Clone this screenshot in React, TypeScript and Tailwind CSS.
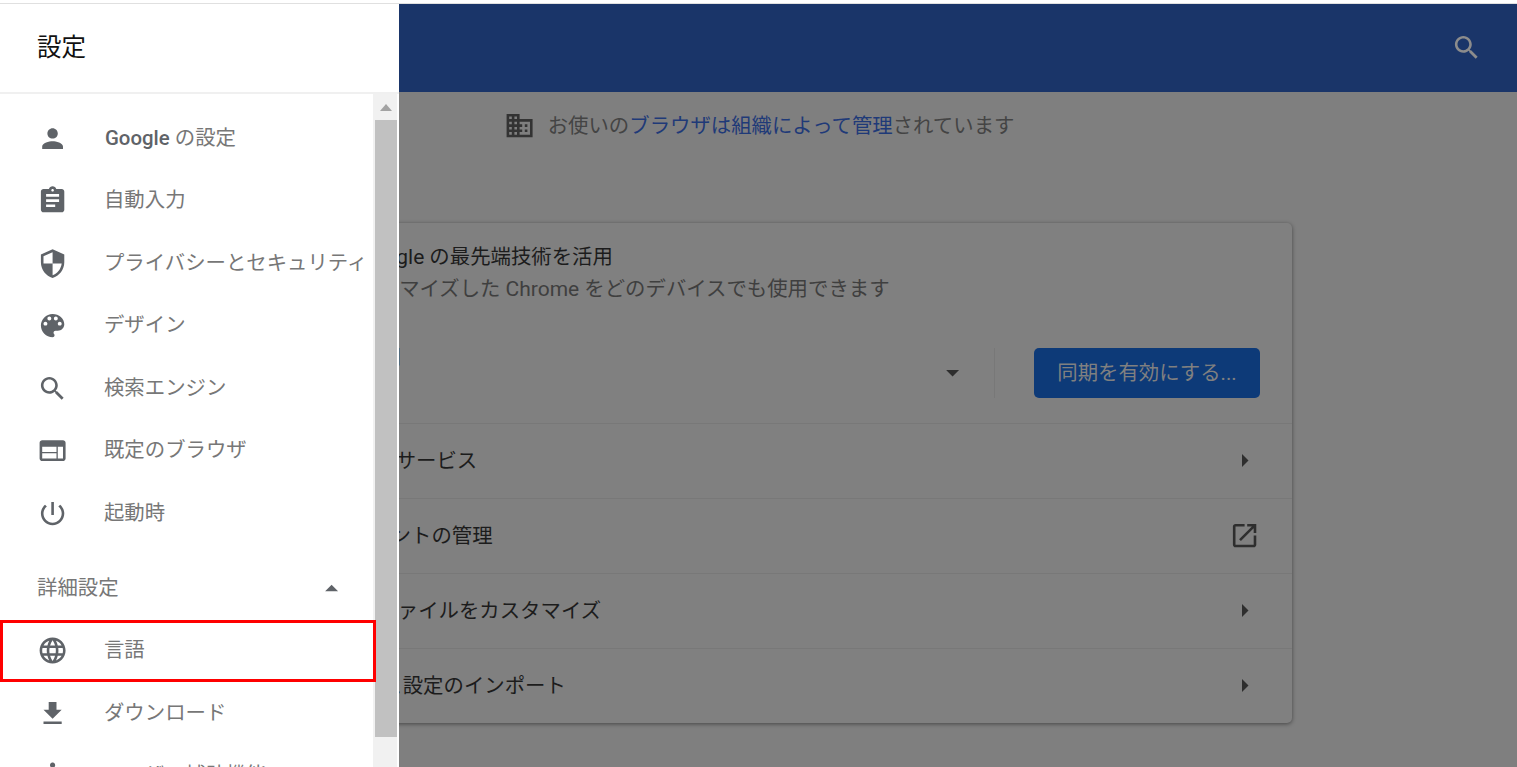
const JP = "font-['Roboto','Noto_Sans_CJK_JP',sans-serif]";

const ICONS = {
  person: 'M12 12c2.21 0 4-1.79 4-4s-1.79-4-4-4-4 1.79-4 4 1.79 4 4 4zm0 2c-2.67 0-8 1.34-8 4v2h16v-2c0-2.66-5.33-4-8-4z',
  assignment: 'M19 3h-4.18C14.4 1.84 13.3 1 12 1c-1.3 0-2.4.84-2.82 2H5c-1.1 0-2 .9-2 2v14c0 1.1.9 2 2 2h14c1.1 0 2-.9 2-2V5c0-1.1-.9-2-2-2zm-7 0c.55 0 1 .45 1 1s-.45 1-1 1-1-.45-1-1 .45-1 1-1zm2 14H7v-2h7v2zm3-4H7v-2h10v2zm0-4H7V7h10v2z',
  security: 'M12 1L3 5v6c0 5.55 3.84 10.74 9 12 5.16-1.26 9-6.45 9-12V5l-9-4zm0 10.99h7c-.53 4.12-3.28 7.79-7 8.94V12H5V6.3l7-3.11v8.8z',
  palette: 'M12 3c-4.97 0-9 4.03-9 9s4.03 9 9 9c.83 0 1.5-.67 1.5-1.5 0-.39-.15-.74-.39-1.01-.23-.26-.38-.61-.38-.99 0-.83.67-1.5 1.5-1.5H16c2.76 0 5-2.24 5-5 0-4.42-4.03-8-9-8zm-5.5 9c-.83 0-1.5-.67-1.5-1.5S5.67 9 6.5 9 8 9.67 8 10.5 7.33 12 6.5 12zm3-4C8.67 8 8 7.33 8 6.5S8.67 5 9.5 5s1.5.67 1.5 1.5S10.33 8 9.5 8zm5 0c-.83 0-1.5-.67-1.5-1.5S13.67 5 14.5 5s1.5.67 1.5 1.5S15.33 8 14.5 8zm3 4c-.83 0-1.5-.67-1.5-1.5S16.67 9 17.5 9s1.5.67 1.5 1.5-.67 1.5-1.5 1.5z',
  search: 'M15.5 14h-.79l-.28-.27C15.41 12.59 16 11.11 16 9.5 16 5.91 13.09 3 9.5 3S3 5.91 3 9.5 5.91 16 9.5 16c1.61 0 3.09-.59 4.23-1.57l.27.28v.79l5 4.99L20.49 19l-4.99-5zm-6 0C7.01 14 5 11.99 5 9.5S7.01 5 9.5 5 14 7.01 14 9.5 11.99 14 9.5 14z',
  browser: 'M20 4H4c-1.1 0-2 .9-2 2v12c0 1.1.9 2 2 2h16c1.1 0 2-.9 2-2V6c0-1.1-.9-2-2-2zm-5 14H4v-4h11v4zm0-5H4V9h11v4zm5 5h-4V9h4v9z',
  power: 'M13 3h-2v10h2V3zm4.83 2.17l-1.42 1.42C17.99 7.86 19 9.81 19 12c0 3.87-3.13 7-7 7s-7-3.13-7-7c0-2.19 1.01-4.14 2.58-5.42L6.17 5.17C4.23 6.82 3 9.26 3 12c0 4.97 4.03 9 9 9s9-4.03 9-9c0-2.74-1.23-5.18-3.17-6.83z',
  language: 'M11.99 2C6.47 2 2 6.48 2 12s4.47 10 9.99 10C17.52 22 22 17.52 22 12S17.52 2 11.99 2zm6.93 6h-2.95c-.32-1.25-.78-2.45-1.38-3.56 1.84.63 3.37 1.91 4.33 3.56zM12 4.04c.83 1.2 1.48 2.53 1.91 3.96h-3.82c.43-1.43 1.08-2.76 1.91-3.96zM4.26 14C4.1 13.36 4 12.69 4 12s.1-1.36.26-2h3.38c-.08.66-.14 1.32-.14 2 0 .68.06 1.34.14 2H4.26zm.82 2h2.95c.32 1.25.78 2.45 1.38 3.56-1.84-.63-3.37-1.9-4.33-3.56zm2.95-8H5.08c.96-1.66 2.49-2.93 4.33-3.56C8.81 5.55 8.35 6.75 8.03 8zM12 19.96c-.83-1.2-1.48-2.53-1.91-3.96h3.82c-.43 1.43-1.08 2.76-1.91 3.96zM14.34 14H9.66c-.09-.66-.16-1.32-.16-2 0-.68.07-1.35.16-2h4.68c.09.65.16 1.32.16 2 0 .68-.07 1.34-.16 2zm.25 5.56c.6-1.11 1.06-2.31 1.38-3.56h2.95c-.96 1.65-2.49 2.93-4.33 3.56zM16.36 14c.08-.66.14-1.32.14-2 0-.68-.06-1.34-.14-2h3.38c.16.64.26 1.31.26 2s-.1 1.36-.26 2h-3.38z',
  download: 'M19 9h-4V3H9v6H5l7 7 7-7zM5 18v2h14v-2H5z',
  accessibility: 'M12 2c1.1 0 2 .9 2 2s-.9 2-2 2-2-.9-2-2 .9-2 2-2zm9 7h-6v13h-2v-6h-2v6H9V9H3V7h18v2z',
  business: 'M12 7V3H2v18h20V7H12zM6 19H4v-2h2v2zm0-4H4v-2h2v2zm0-4H4V9h2v2zm0-4H4V5h2v2zm4 12H8v-2h2v2zm0-4H8v-2h2v2zm0-4H8V9h2v2zm0-4H8V5h2v2zm10 12h-8v-2h2v-2h-2v-2h2v-2h-2V9h8v10zm-2-8h-2v2h2v-2zm0 4h-2v2h2v-2z',
  openInNew: 'M19 19H5V5h7V3H5c-1.11 0-2 .9-2 2v14c0 1.1.89 2 2 2h14c1.1 0 2-.9 2-2v-7h-2v7zM14 3v2h3.59l-9.83 9.83 1.41 1.41L19 6.41V10h2V3h-7z',
  dropDown: 'M7 10l5 5 5-5z',
  dropUp: 'M7 14l5-5 5 5z',
  right: 'M10 17l5-5-5-5v10z',
};

function Icon({ d, className }: { d: string; className: string }) {
  return (
    <svg viewBox="0 0 24 24" className={`h-[31.2px] w-[31.2px] shrink-0 ${className}`} fill="currentColor">
      <path d={d} />
    </svg>
  );
}

const MENU = [
  { icon: ICONS.assignment, label: '自動入力' },
  { icon: ICONS.security, label: 'プライバシーとセキュリティ' },
  { icon: ICONS.palette, label: 'デザイン' },
  { icon: ICONS.search, label: '検索エンジン' },
  { icon: ICONS.browser, label: '既定のブラウザ' },
  { icon: ICONS.power, label: '起動時' },
];

function MenuRow({ icon, children, boxed }: { icon: string; children: React.ReactNode; boxed?: boolean }) {
  return (
    <div className="relative flex h-[62.5px] shrink-0 items-center pl-[37px]">
      <Icon d={icon} className="text-[#5f6368]" />
      <span className="ml-[35.8px] whitespace-nowrap text-[20.4px] text-[#777777]">{children}</span>
      {boxed && <div className="absolute -right-[3px] bottom-0 left-0 top-0 z-10 border-[3px] border-[#ff0000]" />}
    </div>
  );
}

function CardRow({ label, icon = ICONS.right }: { label: string; icon?: string }) {
  return (
    <div className="flex h-[75px] items-center justify-between border-t border-[#787878] pl-[35px] pr-[32px]">
      <span className="text-[20.4px] text-[#1c1c1c]">{label}</span>
      <Icon d={icon} className="text-[#2e2e2e]" />
    </div>
  );
}

export default function App() {
  return (
    <div className={`relative h-[767px] w-full overflow-hidden bg-[#7f7f7f] ${JP}`}>
      <div className="h-[4px] border-b border-[#e0e0e0] bg-white" />

      {/* page behind the scrim */}
      <header className="flex h-[88px] items-center justify-end bg-[#1a3569] pr-[34.4px]">
        <Icon d={ICONS.search} className="text-[#8c8c8c]" />
      </header>

      <div className="ml-[504px] mt-[18.4px] flex items-center">
        <Icon d={ICONS.business} className="text-[#333333]" />
        <p className="ml-[12.5px] text-[20.4px] text-[#444444]">
          お使いの<span className="text-[#1f3a78]">ブラウザは組織によって管理</span>されています
        </p>
      </div>

      <section className="mx-auto mt-[81.4px] h-[500px] w-[1067px] rounded-[5px] bg-[#808080] shadow-[0_1px_4px_rgba(0,0,0,0.45)]">
        <div className="h-[200px] pr-[32px] pt-[18px]">
          <p className="pl-[133px] text-[20.4px] leading-[32px] text-[#1c1c1c]">
            <span className="text-[21px]">Google</span> の最先端技術を活用
          </p>
          <p className="pl-[113px] text-[20.4px] leading-[32px] text-[#3f3f3f]">
            カスタマイズした <span className="text-[21px]">Chrome</span> をどのデバイスでも使用できます
          </p>
          <div className="mt-[43px] flex h-[50px] justify-between">
            <span className="-mt-[5px] ml-[136px] text-[20px] leading-[28px] text-[#1c1c1c]">山田</span>
            <div className="flex items-center">
              <Icon d={ICONS.dropDown} className="text-[#2e2e2e]" />
              <div className="ml-[25.4px] mr-[39px] h-[50px] w-px bg-[#787878]" />
              <button className="flex h-[50px] w-[226px] items-center justify-center rounded-[5px] bg-[#0d3a78] text-[20.4px] text-[#808080]">
                同期を有効にする...
              </button>
            </div>
          </div>
        </div>
        <CardRow label="同期と Google サービス" />
        <CardRow label="Google アカウントの管理" icon={ICONS.openInNew} />
        <CardRow label="Chrome プロファイルをカスタマイズ" />
        <CardRow label="ブックマークと設定のインポート" />
      </section>

      {/* settings drawer */}
      <aside className="absolute bottom-0 left-0 top-[4px] flex w-[399px] flex-col bg-white">
        <div className="flex h-[88px] shrink-0 items-center pl-[37px] text-[24.5px] text-[#111111]">設定</div>
        <div className="flex min-h-0 flex-1 border-t-2 border-[#f0f0f0]">
          <nav className="flex w-[373px] shrink-0 flex-col pt-[13px]">
            <MenuRow icon={ICONS.person}>
              <span className="ml-[1px] font-medium text-[#5f6368]">Google</span> の設定
            </MenuRow>
            {MENU.map((m) => (
              <MenuRow key={m.label} icon={m.icon}>
                {m.label}
              </MenuRow>
            ))}
            <div className="flex h-[75px] shrink-0 items-center justify-between pl-[37px] pr-[25.4px] pt-[12.5px]">
              <span className="text-[20.4px] text-[#777777]">詳細設定</span>
              <Icon d={ICONS.dropUp} className="text-[#5f6368]" />
            </div>
            <MenuRow icon={ICONS.language} boxed>
              言語
            </MenuRow>
            <MenuRow icon={ICONS.download}>ダウンロード</MenuRow>
            <MenuRow icon={ICONS.accessibility}>ユーザー補助機能</MenuRow>
          </nav>
          <div className="flex w-[24px] flex-col bg-[#f1f1f1] pl-[2px]">
            <div className="flex h-[26px] items-center justify-center">
              <div className="h-0 w-0 border-x-[6px] border-b-[7px] border-x-transparent border-b-[#a3a3a3]" />
            </div>
            <div className="h-[617px] bg-[#c1c1c1]" />
          </div>
        </div>
      </aside>
    </div>
  );
}
